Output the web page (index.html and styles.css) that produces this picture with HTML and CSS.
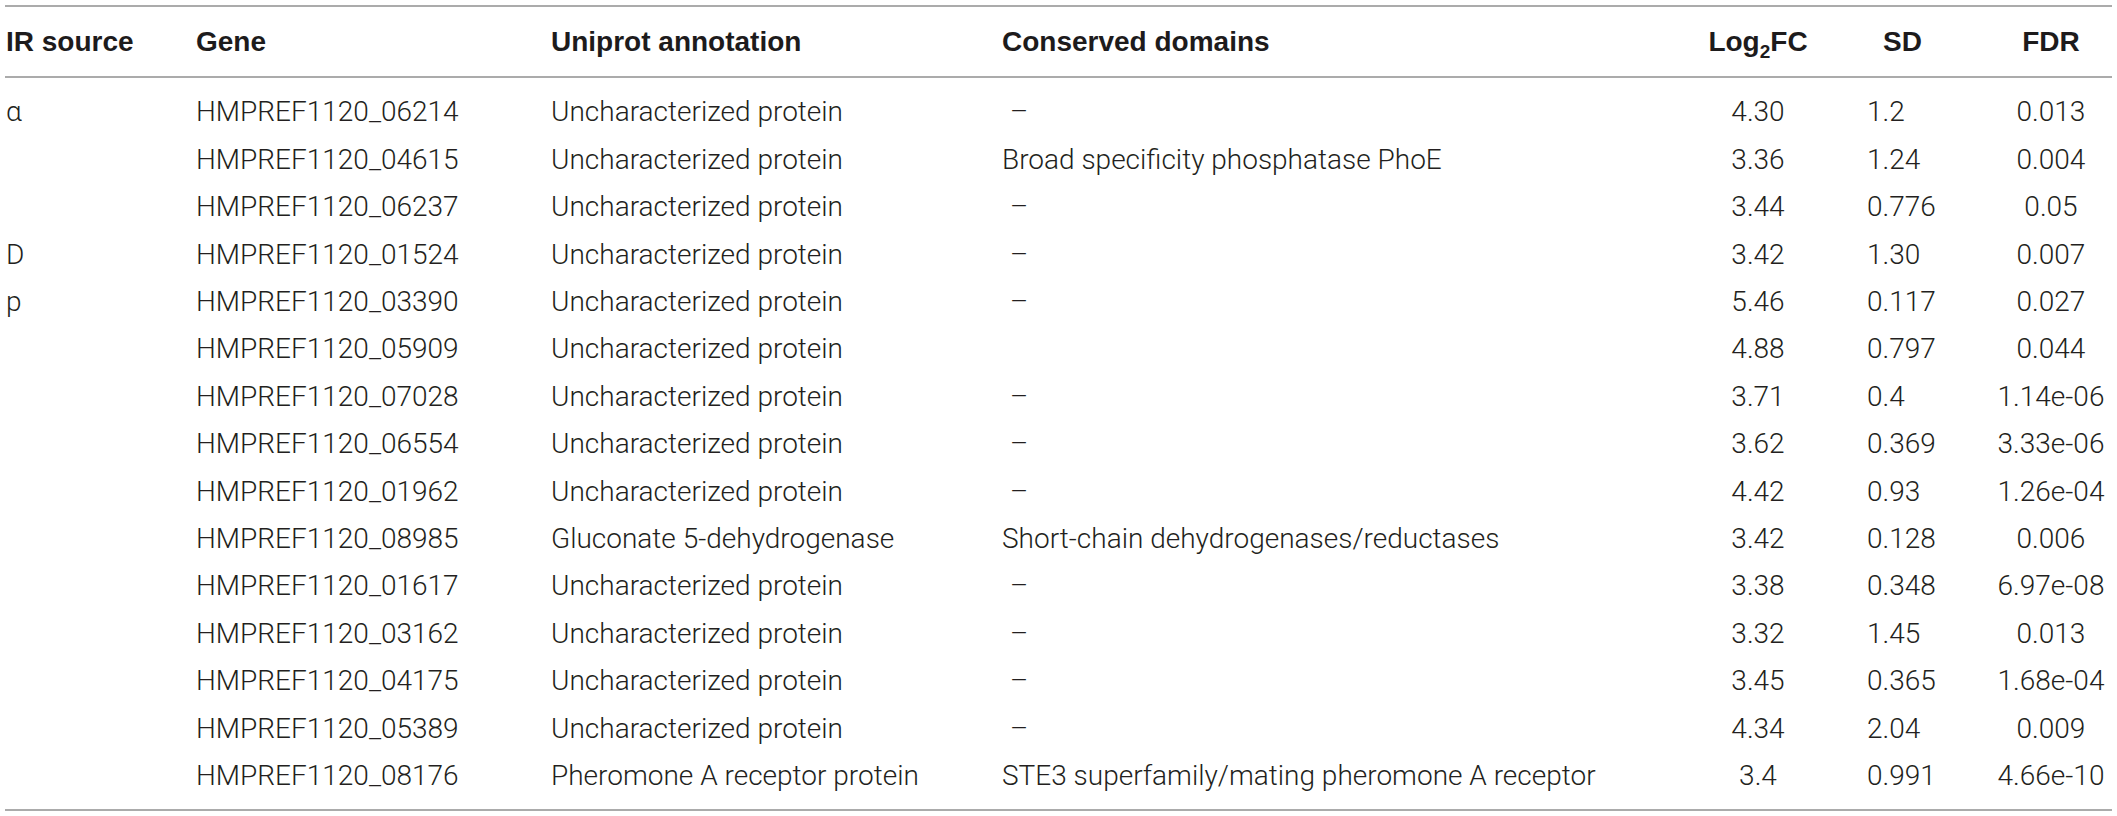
FILE: index.html
```html
<!DOCTYPE html>
<html lang="en">
<head>
<meta charset="utf-8">
<title>IR genes</title>
<link rel="stylesheet" href="styles.css">
</head>
<body>
<table class="tbl">
  <colgroup>
    <col class="c-src"><col class="c-gene"><col class="c-uni"><col class="c-dom"><col class="c-fc"><col class="c-sd"><col class="c-fdr">
  </colgroup>
  <thead>
    <tr>
      <th class="src">IR source</th>
      <th>Gene</th>
      <th>Uniprot annotation</th>
      <th>Conserved domains</th>
      <th class="fc">Log<sub class="sub">2</sub>FC</th>
      <th class="sd-h">SD</th>
      <th class="fdr">FDR</th>
    </tr>
  </thead>
  <tbody>
    <tr><td class="src">α</td><td>HMPREF1120_06214</td><td>Uncharacterized protein</td><td><span class="dash">–</span></td><td class="fc">4.30</td><td class="sd">1.2</td><td class="fdr">0.013</td></tr>
    <tr><td class="src"></td><td>HMPREF1120_04615</td><td>Uncharacterized protein</td><td>Broad specificity phosphatase PhoE</td><td class="fc">3.36</td><td class="sd">1.24</td><td class="fdr">0.004</td></tr>
    <tr><td class="src"></td><td>HMPREF1120_06237</td><td>Uncharacterized protein</td><td><span class="dash">–</span></td><td class="fc">3.44</td><td class="sd">0.776</td><td class="fdr">0.05</td></tr>
    <tr><td class="src">D</td><td>HMPREF1120_01524</td><td>Uncharacterized protein</td><td><span class="dash">–</span></td><td class="fc">3.42</td><td class="sd">1.30</td><td class="fdr">0.007</td></tr>
    <tr><td class="src">p</td><td>HMPREF1120_03390</td><td>Uncharacterized protein</td><td><span class="dash">–</span></td><td class="fc">5.46</td><td class="sd">0.117</td><td class="fdr">0.027</td></tr>
    <tr><td class="src"></td><td>HMPREF1120_05909</td><td>Uncharacterized protein</td><td></td><td class="fc">4.88</td><td class="sd">0.797</td><td class="fdr">0.044</td></tr>
    <tr><td class="src"></td><td>HMPREF1120_07028</td><td>Uncharacterized protein</td><td><span class="dash">–</span></td><td class="fc">3.71</td><td class="sd">0.4</td><td class="fdr">1.14e-06</td></tr>
    <tr><td class="src"></td><td>HMPREF1120_06554</td><td>Uncharacterized protein</td><td><span class="dash">–</span></td><td class="fc">3.62</td><td class="sd">0.369</td><td class="fdr">3.33e-06</td></tr>
    <tr><td class="src"></td><td>HMPREF1120_01962</td><td>Uncharacterized protein</td><td><span class="dash">–</span></td><td class="fc">4.42</td><td class="sd">0.93</td><td class="fdr">1.26e-04</td></tr>
    <tr><td class="src"></td><td>HMPREF1120_08985</td><td>Gluconate 5-dehydrogenase</td><td>Short-chain dehydrogenases/reductases</td><td class="fc">3.42</td><td class="sd">0.128</td><td class="fdr">0.006</td></tr>
    <tr><td class="src"></td><td>HMPREF1120_01617</td><td>Uncharacterized protein</td><td><span class="dash">–</span></td><td class="fc">3.38</td><td class="sd">0.348</td><td class="fdr">6.97e-08</td></tr>
    <tr><td class="src"></td><td>HMPREF1120_03162</td><td>Uncharacterized protein</td><td><span class="dash">–</span></td><td class="fc">3.32</td><td class="sd">1.45</td><td class="fdr">0.013</td></tr>
    <tr><td class="src"></td><td>HMPREF1120_04175</td><td>Uncharacterized protein</td><td><span class="dash">–</span></td><td class="fc">3.45</td><td class="sd">0.365</td><td class="fdr">1.68e-04</td></tr>
    <tr><td class="src"></td><td>HMPREF1120_05389</td><td>Uncharacterized protein</td><td><span class="dash">–</span></td><td class="fc">4.34</td><td class="sd">2.04</td><td class="fdr">0.009</td></tr>
    <tr><td class="src"></td><td>HMPREF1120_08176</td><td>Pheromone A receptor protein</td><td>STE3 superfamily/mating pheromone A receptor</td><td class="fc">3.4</td><td class="sd">0.991</td><td class="fdr">4.66e-10</td></tr>
  </tbody>
</table>
</body>
</html>
```

FILE: styles.css
```css
html, body {
  margin: 0;
  padding: 0;
  background: #ffffff;
}

.tbl {
  margin: 5px 0 0 5px;
  width: 2107px;
  table-layout: fixed;
  border-collapse: separate;
  border-spacing: 0;
  color: #231f20;
  font-family: Roboto, "Liberation Sans", Arial, sans-serif;
  font-weight: 300;
  font-size: 28px;
}

.c-src { width: 191px; }
.c-gene { width: 355px; }
.c-uni { width: 451px; }
.c-dom { width: 678px; }
.c-fc { width: 156px; }
.c-sd { width: 154px; }
.c-fdr { width: 122px; }

.tbl th {
  font-family: "Liberation Sans", Arial, Helvetica, sans-serif;
  font-weight: 700;
  font-size: 28px;
  line-height: 69px;
  padding: 0;
  text-align: left;
  white-space: nowrap;
  color: #1d1b1c;
  border-top: 2px solid #ababab;
  border-bottom: 2px solid #ababab;
}

.tbl td {
  padding: 0;
  line-height: 47.4px;
  text-align: left;
  white-space: nowrap;
  vertical-align: middle;
}

.tbl tbody tr:first-child td {
  padding-top: 10.3px;
}

.tbl tbody tr:last-child td {
  padding-bottom: 10px;
  border-bottom: 2px solid #ababab;
}

.tbl .src {
  padding-left: 1px;
}

.tbl .fc {
  text-align: center;
}

.tbl .sd {
  padding-left: 31px;
}

.tbl .sd-h {
  padding-left: 47px;
}

.tbl .fdr {
  text-align: center;
}

.sub {
  font-size: 19px;
  line-height: 0;
  vertical-align: -7px;
}

.dash {
  padding-left: 8px;
}
```
